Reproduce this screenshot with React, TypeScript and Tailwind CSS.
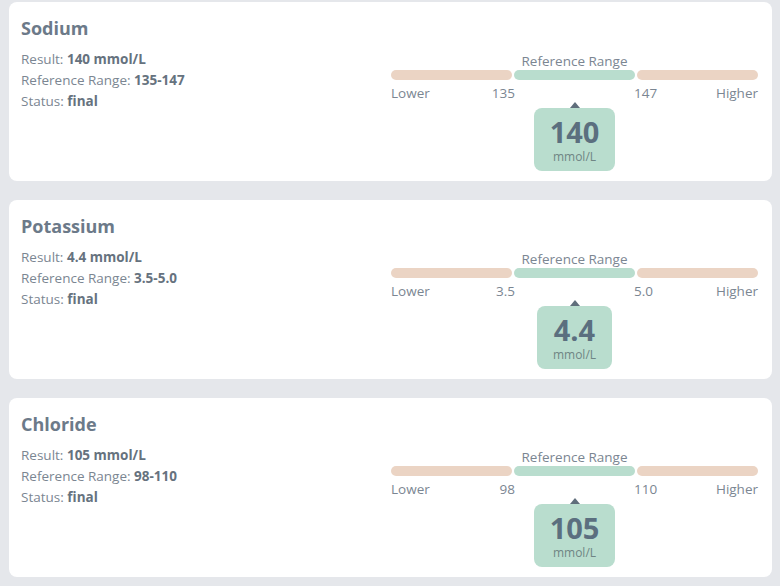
const results = [
  { name: "Sodium", value: "140", unit: "mmol/L", low: "135", high: "147" },
  { name: "Potassium", value: "4.4", unit: "mmol/L", low: "3.5", high: "5.0" },
  { name: "Chloride", value: "105", unit: "mmol/L", low: "98", high: "110" },
];

function RangeGauge({ value, unit, low, high }: { value: string; unit: string; low: string; high: string }) {
  return (
    <div className="w-[367px] pt-[3px] text-[13.5px] text-[#7b8692]">
      <div className="grid grid-cols-3 gap-x-[2px]">
        <div />
        <div className="text-center leading-[18px] whitespace-nowrap">Reference Range</div>
        <div />
        <div className="h-[10px] rounded-full bg-[#ebd4c4]" />
        <div className="h-[10px] rounded-full bg-[#b9ddce]" />
        <div className="h-[10px] rounded-full bg-[#ebd4c4]" />
        <div className="mt-[4px] flex justify-between leading-[18px]">
          <span>Lower</span>
          <span className="mr-[-3px]">{low}</span>
        </div>
        <div />
        <div className="mt-[4px] flex justify-between leading-[18px]">
          <span className="ml-[-3px]">{high}</span>
          <span>Higher</span>
        </div>
      </div>
      <div className="flex flex-col items-center">
        <div className="h-0 w-0 border-x-[5px] border-b-[6px] border-x-transparent border-b-[#5f6e7b]" />
        <div className="flex flex-col items-center rounded-lg bg-[#b9ddce] px-4 pt-[10px] pb-[6px]">
          <span className="text-[29px] leading-[28px] font-bold text-[#5b6f7f]">{value}</span>
          <span className="mt-[3px] text-[12px] leading-4 text-[#6f8584]">{unit}</span>
        </div>
      </div>
    </div>
  );
}

export default function App() {
  return (
    <div
      className="min-h-[586px] bg-[#e5e7eb] px-[9px] pt-[2px] flex flex-col gap-[19px]"
      style={{ fontFamily: '"Open Sans", "Noto Sans", sans-serif' }}
    >
      {results.map((r) => (
        <div key={r.name} className="h-[179px] w-[763px] rounded-lg bg-white pl-3 pr-[14px] pt-[14px]">
          <h2 className="text-[18px] leading-6 font-bold text-[#6c7a89]">{r.name}</h2>
          <div className="mt-[9px] flex justify-between">
            <div className="text-[13.5px] leading-[21px] text-[#7b8692]">
              <div>
                Result: <span className="font-bold text-[#66727e]">{r.value} {r.unit}</span>
              </div>
              <div>
                Reference Range: <span className="font-bold text-[#66727e]">{r.low}-{r.high}</span>
              </div>
              <div>
                Status: <span className="font-bold text-[#66727e]">final</span>
              </div>
            </div>
            <RangeGauge value={r.value} unit={r.unit} low={r.low} high={r.high} />
          </div>
        </div>
      ))}
    </div>
  );
}
